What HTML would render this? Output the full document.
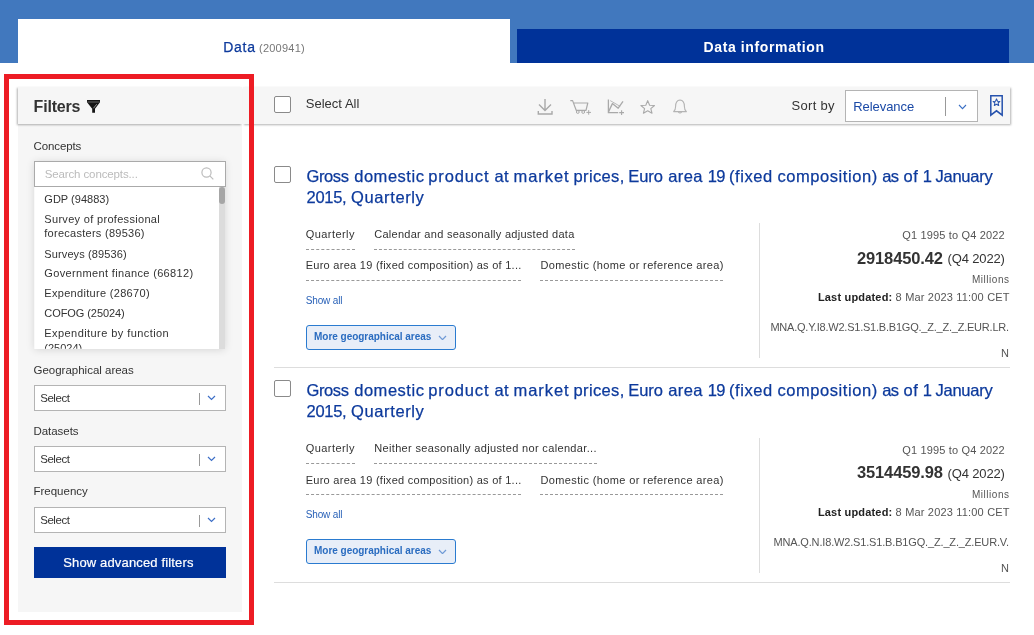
<!DOCTYPE html>
<html><head><meta charset="utf-8">
<style>
html,body{margin:0;padding:0;}
body{width:1034px;height:635px;position:relative;overflow:hidden;background:#fff;font-family:"Liberation Sans",sans-serif;}
.a{position:absolute;box-sizing:content-box;}
.t{position:absolute;white-space:nowrap;}
.tl{position:absolute;left:0;top:0;width:1034px;height:635px;will-change:transform;}
.sel{background:#fff;border:1px solid #b4b4b4;}
.dash{height:0;border-top:1px dashed #999;}
.cb{width:15px;height:15px;border:1px solid #8a8a8a;border-radius:2px;background:#fff;}
.more{border:1px solid #2a7bd0;border-radius:3px;background:#e8eef8;}
</style></head><body>
<div class="a" style="left:0;top:0;width:1034px;height:63px;background:#4178be"></div>
<div class="a" style="left:18px;top:19px;width:492px;height:44px;background:#fff"></div>
<div class="a" style="left:517px;top:29px;width:492px;height:34px;background:#003299"></div>

<div class="a" style="left:18px;top:87px;width:224px;height:525px;background:#f6f6f6"></div>
<div class="a" style="left:18px;top:87px;width:224px;height:37px;background:#f6f6f6;box-shadow:-1px 1px 2px rgba(0,0,0,.3)"></div>
<div class="a" style="left:243px;top:87px;width:767px;height:37px;background:#f6f6f6;box-shadow:0.5px 1px 2px rgba(0,0,0,.3)"></div>

<div class="a" style="left:34px;top:161px;width:191px;height:188px;background:#fff;box-shadow:0 1px 8px rgba(0,0,0,.13)"></div>
<div class="a" style="left:34px;top:186px;width:1px;height:163px;background:#f9f9f9"></div>
<div class="a" style="left:219px;top:187px;width:6px;height:162px;background:#dcdcdc"></div>
<div class="a" style="left:219px;top:187px;width:6px;height:17px;background:#a6a6a6;border-radius:3px"></div>
<div class="a sel" style="left:34px;top:161px;width:190px;height:24px;border-color:#aaa"></div>
<div class="a sel" style="left:34px;top:385px;width:190px;height:24px"></div><div class="a" style="left:199px;top:393px;width:1px;height:12px;background:#999"></div><svg class="a" style="left:206.8px;top:395px" width="9" height="5.5" viewBox="-1 -1 9 5.5"><path d="M0 0 L3.5 3.5 L7 0" fill="none" stroke="#3d6fc7" stroke-width="1.2"/></svg><div class="a sel" style="left:34px;top:446px;width:190px;height:24px"></div><div class="a" style="left:199px;top:454px;width:1px;height:12px;background:#999"></div><svg class="a" style="left:206.8px;top:456px" width="9" height="5.5" viewBox="-1 -1 9 5.5"><path d="M0 0 L3.5 3.5 L7 0" fill="none" stroke="#3d6fc7" stroke-width="1.2"/></svg><div class="a sel" style="left:34px;top:507px;width:190px;height:24px"></div><div class="a" style="left:199px;top:515px;width:1px;height:12px;background:#999"></div><svg class="a" style="left:206.8px;top:517px" width="9" height="5.5" viewBox="-1 -1 9 5.5"><path d="M0 0 L3.5 3.5 L7 0" fill="none" stroke="#3d6fc7" stroke-width="1.2"/></svg>
<div class="a" style="left:34px;top:547px;width:192px;height:31px;background:#003299"></div>

<div class="a cb" style="left:274px;top:96px"></div>
<div class="a sel" style="left:845px;top:90px;width:131px;height:30px"></div>
<div class="a" style="left:945px;top:97px;width:1px;height:19px;background:#999"></div>
<svg class="a" style="left:957.8px;top:104.2px" width="9" height="5.6" viewBox="-1 -1 9 5.6"><path d="M0 0 L3.5 3.6 L7 0" fill="none" stroke="#3a6fc4" stroke-width="1.1"/></svg>

<svg class="a" style="left:0;top:0;z-index:5" width="1034" height="635" viewBox="0 0 1034 635" fill="none">
 <g stroke="#a9a9a9" stroke-width="1.4">
  <path d="M545 99 V110.3 M539 104.6 L545 110.6 L551 104.6"/>
  <path d="M538.3 111 V114 H552 V111"/>
 </g>
 <g stroke="#a9a9a9" stroke-width="1.2">
  <path d="M570.3 100.6 H572.6 L576.2 110.3 H586 L587.8 103 H573.8" stroke-linejoin="round"/>
  <circle cx="577.8" cy="112" r="1.4" stroke-width="1"/><circle cx="583.2" cy="112" r="1.4" stroke-width="1"/>
  <path d="M586.4 112.4 H591 M588.7 110.1 V114.7" stroke-width="1"/>
 </g>
 <g stroke="#a9a9a9">
  <path d="M608.4 99.4 V112.6 H618.2" stroke-width="1.3"/>
  <path d="M608.6 111.6 L612.4 103.6 L618.2 108.2 L623 101.4" stroke-width="1.3" stroke-linejoin="round"/>
  <path d="M610.2 100.6 L620.2 106.4" stroke-width="0.8"/>
  <path d="M619.2 112.6 H624 M621.6 110.2 V115" stroke-width="1.1"/>
 </g>
 <path d="M647.7 100.6 L649.6 105.2 L654.5 105.5 L650.8 108.7 L652 113.2 L647.7 110.7 L643.4 113.2 L644.6 108.7 L640.9 105.5 L645.8 105.2 Z" stroke="#a9a9a9" stroke-width="1.1" stroke-linejoin="round"/>
 <g stroke="#b4b4b4" stroke-width="1.1">
  <path d="M673.6 111.6 Q675.6 110 675.6 106.4 Q675.6 100.4 680 100 Q684.4 100.4 684.4 106.4 Q684.4 110 686.4 111.6 Z" stroke-linejoin="round"/>
  <path d="M678.3 112 Q680 114 681.7 112"/>
 </g>
 <g stroke="#2652ad" stroke-width="1.5" stroke-linejoin="miter">
  <path d="M990.8 95.8 H1002.2 V115.2 L996.5 110.8 L990.8 115.2 Z"/>
  <path d="M996.5 98.9 L997.5 101.3 L999.9 101.4 L998.1 103 L998.7 105.5 L996.5 104.2 L994.3 105.5 L994.9 103 L993.1 101.4 L995.5 101.3 Z" stroke-width="1.05" stroke-linejoin="round"/>
 </g>
 <path d="M87 100 H100 V102.3 L95 108.8 V112.8 H92.2 V108.8 L87 102.3 Z" fill="#151515"/>
 <path d="M87.5 102 H99.5" stroke="#8a8a8a" stroke-width="0.7"/>
 <path d="M96.8 104.2 L93.4 108.3" stroke="#e8e8e8" stroke-width="0.6"/>
 <g stroke="#bdbdbd" stroke-width="1.2"><circle cx="206.5" cy="172.5" r="4.6"/><path d="M209.8 175.8 L213.3 179.3"/></g>
</svg>


<div class="a cb" style="left:274px;top:166px"></div><div class="a dash" style="left:306px;top:249px;width:49px"></div><div class="a dash" style="left:374px;top:249px;width:201px"></div><div class="a dash" style="left:306px;top:280px;width:215px"></div><div class="a dash" style="left:540px;top:280px;width:183px"></div><div class="a more" style="left:306px;top:325px;width:148px;height:23px"></div><svg class="a" style="left:437.8px;top:334.6px" width="9" height="5.6" viewBox="-1 -1 9 5.6"><path d="M0 0 L3.5 3.6 L7 0" fill="none" stroke="#6f9ad6" stroke-width="1.25"/></svg><div class="a" style="left:759px;top:223px;width:1px;height:135px;background:#ddd"></div><div class="a" style="left:274px;top:367px;width:736px;height:1px;background:#ddd"></div>
<div class="a cb" style="left:274px;top:380px"></div><div class="a dash" style="left:306px;top:463px;width:49px"></div><div class="a dash" style="left:374px;top:463px;width:223px"></div><div class="a dash" style="left:306px;top:494px;width:215px"></div><div class="a dash" style="left:540px;top:494px;width:183px"></div><div class="a more" style="left:306px;top:539px;width:148px;height:23px"></div><svg class="a" style="left:437.8px;top:548.6px" width="9" height="5.6" viewBox="-1 -1 9 5.6"><path d="M0 0 L3.5 3.6 L7 0" fill="none" stroke="#6f9ad6" stroke-width="1.25"/></svg><div class="a" style="left:759px;top:438px;width:1px;height:135px;background:#ddd"></div><div class="a" style="left:274px;top:582px;width:736px;height:1px;background:#ddd"></div>
<div class="tl">
<span class="t" id="tabdata" style="top:38.25px;font-size:14px;line-height:18.2px;font-weight:400;color:#0d3a9c;letter-spacing:0.738px;left:223.20px;-webkit-text-stroke:0.25px #0d3a9c;">Data</span>
<span class="t" id="tabcount" style="top:41.24px;font-size:11px;line-height:14.3px;font-weight:400;color:#777;letter-spacing:0.233px;left:259.00px;">(200941)</span>
<span class="t" id="tabinfo" style="top:38.25px;font-size:14px;line-height:18.2px;font-weight:700;color:#fff;letter-spacing:0.622px;left:703.50px;">Data information</span>
<span class="t" id="filters" style="top:96.56px;font-size:16px;line-height:20.8px;font-weight:700;color:#333;letter-spacing:-0.186px;left:33.60px;">Filters</span>
<span class="t" id="concepts" style="top:138.54px;font-size:11.5px;line-height:14.95px;font-weight:400;color:#333;letter-spacing:-0.119px;left:33.60px;">Concepts</span>
<span class="t" id="search" style="top:166.94px;font-size:11.5px;line-height:14.95px;font-weight:400;color:#bbb;letter-spacing:-0.121px;left:44.70px;">Search concepts...</span>
<span class="t" id="c1" style="top:192.04px;font-size:11px;line-height:14.3px;font-weight:400;color:#333;letter-spacing:0.026px;left:44.30px;">GDP (94883)</span>
<span class="t" id="c2a" style="top:212.04px;font-size:11px;line-height:14.3px;font-weight:400;color:#333;letter-spacing:0.315px;left:44.30px;">Survey of professional</span>
<span class="t" id="c2b" style="top:226.04px;font-size:11px;line-height:14.3px;font-weight:400;color:#333;letter-spacing:0.266px;left:44.30px;">forecasters (89536)</span>
<span class="t" id="c3" style="top:246.54px;font-size:11px;line-height:14.3px;font-weight:400;color:#333;letter-spacing:0.118px;left:44.30px;">Surveys (89536)</span>
<span class="t" id="c4" style="top:266.04px;font-size:11px;line-height:14.3px;font-weight:400;color:#333;letter-spacing:0.354px;left:44.30px;">Government finance (66812)</span>
<span class="t" id="c5" style="top:286.04px;font-size:11px;line-height:14.3px;font-weight:400;color:#333;letter-spacing:0.310px;left:44.30px;">Expenditure (28670)</span>
<span class="t" id="c6" style="top:306.04px;font-size:11px;line-height:14.3px;font-weight:400;color:#333;letter-spacing:-0.070px;left:44.30px;">COFOG (25024)</span>
<span class="t" id="c7a" style="top:325.54px;font-size:11px;line-height:14.3px;font-weight:400;color:#333;letter-spacing:0.430px;left:44.30px;">Expenditure by function</span>
<span class="t" id="c7b" style="top:340.74px;font-size:11px;line-height:14.3px;font-weight:400;color:#333;letter-spacing:0.000px;left:44.30px;clip-path:inset(0 0 6.2px 0);">(25024)</span>
<span class="t" id="geo" style="top:362.84px;font-size:11.5px;line-height:14.95px;font-weight:400;color:#333;letter-spacing:-0.007px;left:33.50px;">Geographical areas</span>
<span class="t" id="sel1" style="top:390.54px;font-size:11.5px;line-height:14.95px;font-weight:400;color:#333;letter-spacing:-0.453px;left:40.20px;">Select</span>
<span class="t" id="datasets" style="top:423.74px;font-size:11.5px;line-height:14.95px;font-weight:400;color:#333;letter-spacing:-0.047px;left:33.50px;">Datasets</span>
<span class="t" id="sel2" style="top:451.54px;font-size:11.5px;line-height:14.95px;font-weight:400;color:#333;letter-spacing:-0.453px;left:40.20px;">Select</span>
<span class="t" id="freq" style="top:484.34px;font-size:11.5px;line-height:14.95px;font-weight:400;color:#333;letter-spacing:-0.010px;left:33.50px;">Frequency</span>
<span class="t" id="sel3" style="top:512.54px;font-size:11.5px;line-height:14.95px;font-weight:400;color:#333;letter-spacing:-0.453px;left:40.20px;">Select</span>
<span class="t" id="adv" style="top:554.65px;font-size:13px;line-height:16.9px;font-weight:400;color:#fff;letter-spacing:0.156px;left:63.20px;-webkit-text-stroke:0.2px #fff;">Show advanced filters</span>
<span class="t" id="selall" style="top:96.05px;font-size:13px;line-height:16.9px;font-weight:400;color:#333;letter-spacing:0.011px;left:305.80px;">Select All</span>
<span class="t" id="sortby" style="top:98.05px;font-size:13px;line-height:16.9px;font-weight:400;color:#333;letter-spacing:0.303px;left:791.50px;">Sort by</span>
<span class="t" id="relev" style="top:98.85px;font-size:13px;line-height:16.9px;font-weight:400;color:#1a49a6;letter-spacing:-0.050px;left:853.20px;">Relevance</span>
<span class="t" id="r1tw0" style="top:166.36px;font-size:16.5px;line-height:21.45px;font-weight:400;color:#0d3a9c;letter-spacing:-0.414px;left:306.60px;-webkit-text-stroke:0.25px #0d3a9c;">Gross</span>
<span class="t" id="r1tw1" style="top:166.36px;font-size:16.5px;line-height:21.45px;font-weight:400;color:#0d3a9c;letter-spacing:0.532px;left:354.20px;-webkit-text-stroke:0.25px #0d3a9c;">domestic</span>
<span class="t" id="r1tw2" style="top:166.36px;font-size:16.5px;line-height:21.45px;font-weight:400;color:#0d3a9c;letter-spacing:0.892px;left:428.20px;-webkit-text-stroke:0.25px #0d3a9c;">product</span>
<span class="t" id="r1tw3" style="top:166.36px;font-size:16.5px;line-height:21.45px;font-weight:400;color:#0d3a9c;letter-spacing:0.323px;left:494.50px;-webkit-text-stroke:0.25px #0d3a9c;">at</span>
<span class="t" id="r1tw4" style="top:166.36px;font-size:16.5px;line-height:21.45px;font-weight:400;color:#0d3a9c;letter-spacing:0.932px;left:513.50px;-webkit-text-stroke:0.25px #0d3a9c;">market</span>
<span class="t" id="r1tw5" style="top:166.36px;font-size:16.5px;line-height:21.45px;font-weight:400;color:#0d3a9c;letter-spacing:0.364px;left:573.50px;-webkit-text-stroke:0.25px #0d3a9c;">prices,</span>
<span class="t" id="r1tw6" style="top:166.36px;font-size:16.5px;line-height:21.45px;font-weight:400;color:#0d3a9c;letter-spacing:-0.026px;left:628.20px;-webkit-text-stroke:0.25px #0d3a9c;">Euro</span>
<span class="t" id="r1tw7" style="top:166.36px;font-size:16.5px;line-height:21.45px;font-weight:400;color:#0d3a9c;letter-spacing:0.351px;left:668.30px;-webkit-text-stroke:0.25px #0d3a9c;">area</span>
<span class="t" id="r1tw8" style="top:166.36px;font-size:16.5px;line-height:21.45px;font-weight:400;color:#0d3a9c;letter-spacing:-0.600px;left:707.70px;-webkit-text-stroke:0.25px #0d3a9c;">19</span>
<span class="t" id="r1tw9" style="top:166.36px;font-size:16.5px;line-height:21.45px;font-weight:400;color:#0d3a9c;letter-spacing:0.546px;left:729.00px;-webkit-text-stroke:0.25px #0d3a9c;">(fixed</span>
<span class="t" id="r1tw10" style="top:166.36px;font-size:16.5px;line-height:21.45px;font-weight:400;color:#0d3a9c;letter-spacing:0.569px;left:777.40px;-webkit-text-stroke:0.25px #0d3a9c;">composition)</span>
<span class="t" id="r1tw11" style="top:166.36px;font-size:16.5px;line-height:21.45px;font-weight:400;color:#0d3a9c;letter-spacing:-0.600px;left:882.20px;-webkit-text-stroke:0.25px #0d3a9c;">as</span>
<span class="t" id="r1tw12" style="top:166.36px;font-size:16.5px;line-height:21.45px;font-weight:400;color:#0d3a9c;letter-spacing:0.623px;left:903.50px;-webkit-text-stroke:0.25px #0d3a9c;">of</span>
<span class="t" id="r1tw13" style="top:166.36px;font-size:16.5px;line-height:21.45px;font-weight:400;color:#0d3a9c;letter-spacing:0.000px;left:922.80px;-webkit-text-stroke:0.25px #0d3a9c;">1</span>
<span class="t" id="r1tw14" style="top:166.36px;font-size:16.5px;line-height:21.45px;font-weight:400;color:#0d3a9c;letter-spacing:-0.208px;left:935.40px;-webkit-text-stroke:0.25px #0d3a9c;">January</span>
<span class="t" id="r1tq1" style="top:187.16px;font-size:16.5px;line-height:21.45px;font-weight:400;color:#0d3a9c;letter-spacing:-0.302px;left:306.60px;-webkit-text-stroke:0.25px #0d3a9c;">2015,</span>
<span class="t" id="r1tq2" style="top:187.16px;font-size:16.5px;line-height:21.45px;font-weight:400;color:#0d3a9c;letter-spacing:0.625px;left:351.00px;-webkit-text-stroke:0.25px #0d3a9c;">Quarterly</span>
<span class="t" id="r1q" style="top:227.04px;font-size:11px;line-height:14.3px;font-weight:400;color:#333;letter-spacing:0.446px;left:305.70px;">Quarterly</span>
<span class="t" id="r1cal" style="top:227.04px;font-size:11px;line-height:14.3px;font-weight:400;color:#333;letter-spacing:0.276px;left:374.20px;">Calendar and seasonally adjusted data</span>
<span class="t" id="r1euro" style="top:258.34px;font-size:11px;line-height:14.3px;font-weight:400;color:#333;letter-spacing:0.272px;left:305.70px;">Euro area 19 (fixed composition) as of 1...</span>
<span class="t" id="r1dom" style="top:258.34px;font-size:11px;line-height:14.3px;font-weight:400;color:#333;letter-spacing:0.368px;left:540.50px;">Domestic (home or reference area)</span>
<span class="t" id="r1showall" style="top:294.04px;font-size:10px;line-height:13.0px;font-weight:400;color:#2a62b8;letter-spacing:-0.139px;left:305.70px;">Show all</span>
<span class="t" id="r1more" style="top:330.34px;font-size:10px;line-height:13.0px;font-weight:700;color:#2a6cc0;letter-spacing:-0.025px;left:314.00px;">More geographical areas</span>
<span class="t" id="r1range" style="top:228.04px;font-size:11px;line-height:14.3px;font-weight:400;color:#555;letter-spacing:0.166px;right:29.12px;">Q1 1995 to Q4 2022</span>
<span class="t" id="r1val" style="top:247.56px;font-size:16.5px;line-height:21.45px;font-weight:700;color:#333;letter-spacing:-0.144px;right:91.27px;">2918450.42</span>
<span class="t" id="r1valq" style="top:251.05px;font-size:13px;line-height:16.9px;font-weight:400;color:#333;letter-spacing:-0.150px;right:29.22px;">(Q4 2022)</span>
<span class="t" id="r1mill" style="top:273.04px;font-size:10px;line-height:13.0px;font-weight:400;color:#555;letter-spacing:0.523px;right:24.48px;">Millions</span>
<span class="t" id="r1lu" style="top:290.04px;font-size:11px;line-height:14.3px;font-weight:400;color:#555;letter-spacing:0.180px;right:24.32px;"><b style="color:#222">Last updated:</b> 8 Mar 2023 11:00 CET</span>
<span class="t" id="r1code" style="top:320.04px;font-size:11px;line-height:14.3px;font-weight:400;color:#555;letter-spacing:-0.222px;right:25.17px;">MNA.Q.Y.I8.W2.S1.S1.B.B1GQ._Z._Z._Z.EUR.LR.</span>
<span class="t" id="r1n" style="top:346.04px;font-size:11px;line-height:14.3px;font-weight:400;color:#555;letter-spacing:0.000px;right:25.06px;">N</span>
<span class="t" id="r2tw0" style="top:380.36px;font-size:16.5px;line-height:21.45px;font-weight:400;color:#0d3a9c;letter-spacing:-0.414px;left:306.60px;-webkit-text-stroke:0.25px #0d3a9c;">Gross</span>
<span class="t" id="r2tw1" style="top:380.36px;font-size:16.5px;line-height:21.45px;font-weight:400;color:#0d3a9c;letter-spacing:0.532px;left:354.20px;-webkit-text-stroke:0.25px #0d3a9c;">domestic</span>
<span class="t" id="r2tw2" style="top:380.36px;font-size:16.5px;line-height:21.45px;font-weight:400;color:#0d3a9c;letter-spacing:0.892px;left:428.20px;-webkit-text-stroke:0.25px #0d3a9c;">product</span>
<span class="t" id="r2tw3" style="top:380.36px;font-size:16.5px;line-height:21.45px;font-weight:400;color:#0d3a9c;letter-spacing:0.323px;left:494.50px;-webkit-text-stroke:0.25px #0d3a9c;">at</span>
<span class="t" id="r2tw4" style="top:380.36px;font-size:16.5px;line-height:21.45px;font-weight:400;color:#0d3a9c;letter-spacing:0.932px;left:513.50px;-webkit-text-stroke:0.25px #0d3a9c;">market</span>
<span class="t" id="r2tw5" style="top:380.36px;font-size:16.5px;line-height:21.45px;font-weight:400;color:#0d3a9c;letter-spacing:0.364px;left:573.50px;-webkit-text-stroke:0.25px #0d3a9c;">prices,</span>
<span class="t" id="r2tw6" style="top:380.36px;font-size:16.5px;line-height:21.45px;font-weight:400;color:#0d3a9c;letter-spacing:-0.026px;left:628.20px;-webkit-text-stroke:0.25px #0d3a9c;">Euro</span>
<span class="t" id="r2tw7" style="top:380.36px;font-size:16.5px;line-height:21.45px;font-weight:400;color:#0d3a9c;letter-spacing:0.351px;left:668.30px;-webkit-text-stroke:0.25px #0d3a9c;">area</span>
<span class="t" id="r2tw8" style="top:380.36px;font-size:16.5px;line-height:21.45px;font-weight:400;color:#0d3a9c;letter-spacing:-0.600px;left:707.70px;-webkit-text-stroke:0.25px #0d3a9c;">19</span>
<span class="t" id="r2tw9" style="top:380.36px;font-size:16.5px;line-height:21.45px;font-weight:400;color:#0d3a9c;letter-spacing:0.546px;left:729.00px;-webkit-text-stroke:0.25px #0d3a9c;">(fixed</span>
<span class="t" id="r2tw10" style="top:380.36px;font-size:16.5px;line-height:21.45px;font-weight:400;color:#0d3a9c;letter-spacing:0.569px;left:777.40px;-webkit-text-stroke:0.25px #0d3a9c;">composition)</span>
<span class="t" id="r2tw11" style="top:380.36px;font-size:16.5px;line-height:21.45px;font-weight:400;color:#0d3a9c;letter-spacing:-0.600px;left:882.20px;-webkit-text-stroke:0.25px #0d3a9c;">as</span>
<span class="t" id="r2tw12" style="top:380.36px;font-size:16.5px;line-height:21.45px;font-weight:400;color:#0d3a9c;letter-spacing:0.623px;left:903.50px;-webkit-text-stroke:0.25px #0d3a9c;">of</span>
<span class="t" id="r2tw13" style="top:380.36px;font-size:16.5px;line-height:21.45px;font-weight:400;color:#0d3a9c;letter-spacing:0.000px;left:922.80px;-webkit-text-stroke:0.25px #0d3a9c;">1</span>
<span class="t" id="r2tw14" style="top:380.36px;font-size:16.5px;line-height:21.45px;font-weight:400;color:#0d3a9c;letter-spacing:-0.208px;left:935.40px;-webkit-text-stroke:0.25px #0d3a9c;">January</span>
<span class="t" id="r2tq1" style="top:401.16px;font-size:16.5px;line-height:21.45px;font-weight:400;color:#0d3a9c;letter-spacing:-0.302px;left:306.60px;-webkit-text-stroke:0.25px #0d3a9c;">2015,</span>
<span class="t" id="r2tq2" style="top:401.16px;font-size:16.5px;line-height:21.45px;font-weight:400;color:#0d3a9c;letter-spacing:0.625px;left:351.00px;-webkit-text-stroke:0.25px #0d3a9c;">Quarterly</span>
<span class="t" id="r2q" style="top:441.04px;font-size:11px;line-height:14.3px;font-weight:400;color:#333;letter-spacing:0.446px;left:305.70px;">Quarterly</span>
<span class="t" id="r2cal" style="top:441.04px;font-size:11px;line-height:14.3px;font-weight:400;color:#333;letter-spacing:0.344px;left:374.20px;">Neither seasonally adjusted nor calendar...</span>
<span class="t" id="r2euro" style="top:473.04px;font-size:11px;line-height:14.3px;font-weight:400;color:#333;letter-spacing:0.272px;left:305.70px;">Euro area 19 (fixed composition) as of 1...</span>
<span class="t" id="r2dom" style="top:473.04px;font-size:11px;line-height:14.3px;font-weight:400;color:#333;letter-spacing:0.368px;left:540.50px;">Domestic (home or reference area)</span>
<span class="t" id="r2showall" style="top:508.04px;font-size:10px;line-height:13.0px;font-weight:400;color:#2a62b8;letter-spacing:-0.139px;left:305.70px;">Show all</span>
<span class="t" id="r2more" style="top:544.33px;font-size:10px;line-height:13.0px;font-weight:700;color:#2a6cc0;letter-spacing:-0.025px;left:314.00px;">More geographical areas</span>
<span class="t" id="r2range" style="top:442.84px;font-size:11px;line-height:14.3px;font-weight:400;color:#555;letter-spacing:0.166px;right:29.12px;">Q1 1995 to Q4 2022</span>
<span class="t" id="r2val" style="top:462.36px;font-size:16.5px;line-height:21.45px;font-weight:700;color:#333;letter-spacing:-0.144px;right:91.27px;">3514459.98</span>
<span class="t" id="r2valq" style="top:465.85px;font-size:13px;line-height:16.9px;font-weight:400;color:#333;letter-spacing:-0.150px;right:29.22px;">(Q4 2022)</span>
<span class="t" id="r2mill" style="top:487.84px;font-size:10px;line-height:13.0px;font-weight:400;color:#555;letter-spacing:0.523px;right:24.48px;">Millions</span>
<span class="t" id="r2lu" style="top:504.84px;font-size:11px;line-height:14.3px;font-weight:400;color:#555;letter-spacing:0.180px;right:24.32px;"><b style="color:#222">Last updated:</b> 8 Mar 2023 11:00 CET</span>
<span class="t" id="r2code" style="top:534.84px;font-size:11px;line-height:14.3px;font-weight:400;color:#555;letter-spacing:-0.164px;right:25.11px;">MNA.Q.N.I8.W2.S1.S1.B.B1GQ._Z._Z._Z.EUR.V.</span>
<span class="t" id="r2n" style="top:560.84px;font-size:11px;line-height:14.3px;font-weight:400;color:#555;letter-spacing:0.000px;right:25.06px;">N</span>
</div>
<div class="a" style="left:4px;top:74px;width:240px;height:541px;border:5px solid #ed1c24"></div>
</body></html>
